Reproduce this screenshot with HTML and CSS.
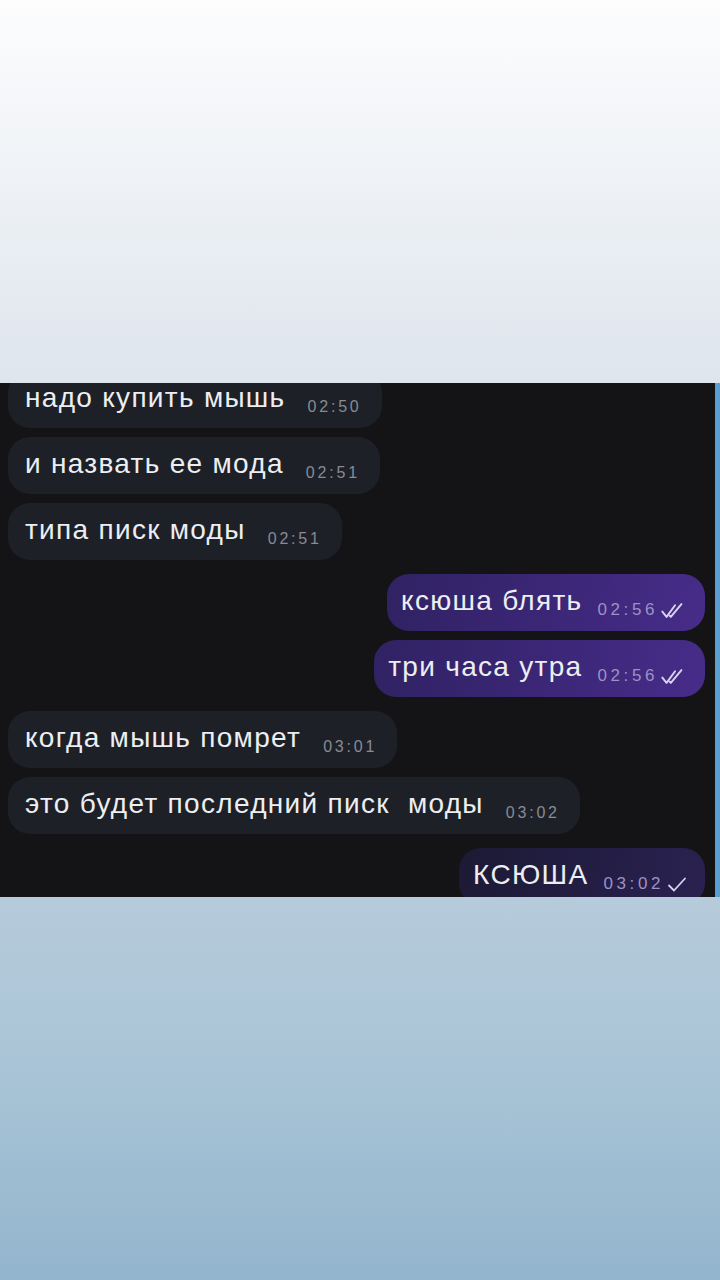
FILE: index.html
```html
<!DOCTYPE html>
<html lang="ru">
<head>
  <meta charset="UTF-8">
  <meta name="viewport" content="width=device-width, initial-scale=1.0">
  <title>Story</title>
  <link rel="stylesheet" href="styles.css">
</head>
<body>
  <div class="story">
    <div class="top-fill"></div>

    <div class="chat">
      <div class="messages">
        <div class="row in first">
          <div class="bubble"><span class="text">надо купить мышь</span><span class="meta">02:50</span></div>
        </div>
        <div class="row in">
          <div class="bubble"><span class="text">и назвать ее мода</span><span class="meta">02:51</span></div>
        </div>
        <div class="row in">
          <div class="bubble"><span class="text">типа писк моды</span><span class="meta">02:51</span></div>
        </div>

        <div class="row out gap">
          <div class="bubble"><span class="text">ксюша блять</span><span class="meta">02:56
            <svg class="ticks" viewBox="0 0 26 16"><path d="M2 9l4 5L14 3M9 13l1 1L20 2"/></svg></span></div>
        </div>
        <div class="row out">
          <div class="bubble"><span class="text">три часа утра</span><span class="meta">02:56
            <svg class="ticks" viewBox="0 0 26 16"><path d="M2 9l4 5L14 3M9 13l1 1L20 2"/></svg></span></div>
        </div>

        <div class="row in gap">
          <div class="bubble"><span class="text">когда мышь помрет</span><span class="meta">03:01</span></div>
        </div>
        <div class="row in">
          <div class="bubble"><span class="text">это будет последний писк&nbsp; моды</span><span class="meta">03:02</span></div>
        </div>

        <div class="row out gap">
          <div class="bubble dim"><span class="text">КСЮША</span><span class="meta">03:02
            <svg class="ticks single" viewBox="0 0 22 16"><path d="M3 9l5 5L19 2"/></svg></span></div>
        </div>
      </div>
      <div class="edge"></div>
    </div>

    <div class="bottom-fill"></div>
  </div>
</body>
</html>
```

FILE: styles.css
```css
body {
  margin: 0;
  padding: 0;
  font-family: "Liberation Sans", Arial, sans-serif;
}

.story {
  width: 720px;
  height: 1280px;
  display: flex;
  flex-direction: column;
  overflow: hidden;
}

.top-fill {
  height: 383px;
  background: linear-gradient(to bottom, #fdfdfe 0%, #eff2f6 45%, #dee5ed 100%);
}

.bottom-fill {
  flex: 1;
  background: linear-gradient(to bottom, #b6cbdb 0%, #a9c4d6 45%, #93b5cd 100%);
}

.chat {
  height: 514px;
  display: flex;
  background-color: #141416;
  overflow: hidden;
}

.messages {
  flex: 1;
  display: flex;
  flex-direction: column;
  gap: 9px;
  padding: 0 10px 0 8px;
}

.edge {
  width: 5px;
  background-color: #5a9fd1;
}

.row {
  display: flex;
}

.row.first {
  margin-top: -12px;
}

.row.gap {
  margin-top: 5px;
}

.row.out {
  justify-content: flex-end;
}

.bubble {
  display: flex;
  align-items: baseline;
  gap: 22px;
  height: 57px;
  box-sizing: border-box;
  padding: 11px 20px 0 17px;
  border-radius: 22px;
  background-color: #1e2027;
  color: #eceef2;
}

.text {
  font-size: 28px;
  line-height: 32px;
  letter-spacing: 1.3px;
}

.meta {
  display: flex;
  align-items: center;
  gap: 2px;
  font-size: 16px;
  letter-spacing: 2.8px;
  color: #868b96;
  position: relative;
  top: 5px;
}

.row.out .bubble {
  gap: 15px;
  padding: 11px 17px 0 14px;
  background: linear-gradient(100deg, #302263 0%, #3c2778 55%, #472c89 100%);
}

.row.out .bubble.dim {
  background: linear-gradient(100deg, #1c1a34 0%, #241e46 60%, #2a2150 100%);
}

.row.out .meta {
  font-size: 17px;
  letter-spacing: 3.6px;
  color: #9d91c6;
}

.ticks {
  width: 28px;
  height: 17px;
  fill: none;
  stroke: #d9d4ee;
  stroke-width: 1.8;
  stroke-linecap: round;
  stroke-linejoin: round;
}

.ticks.single {
  width: 22px;
}
```
